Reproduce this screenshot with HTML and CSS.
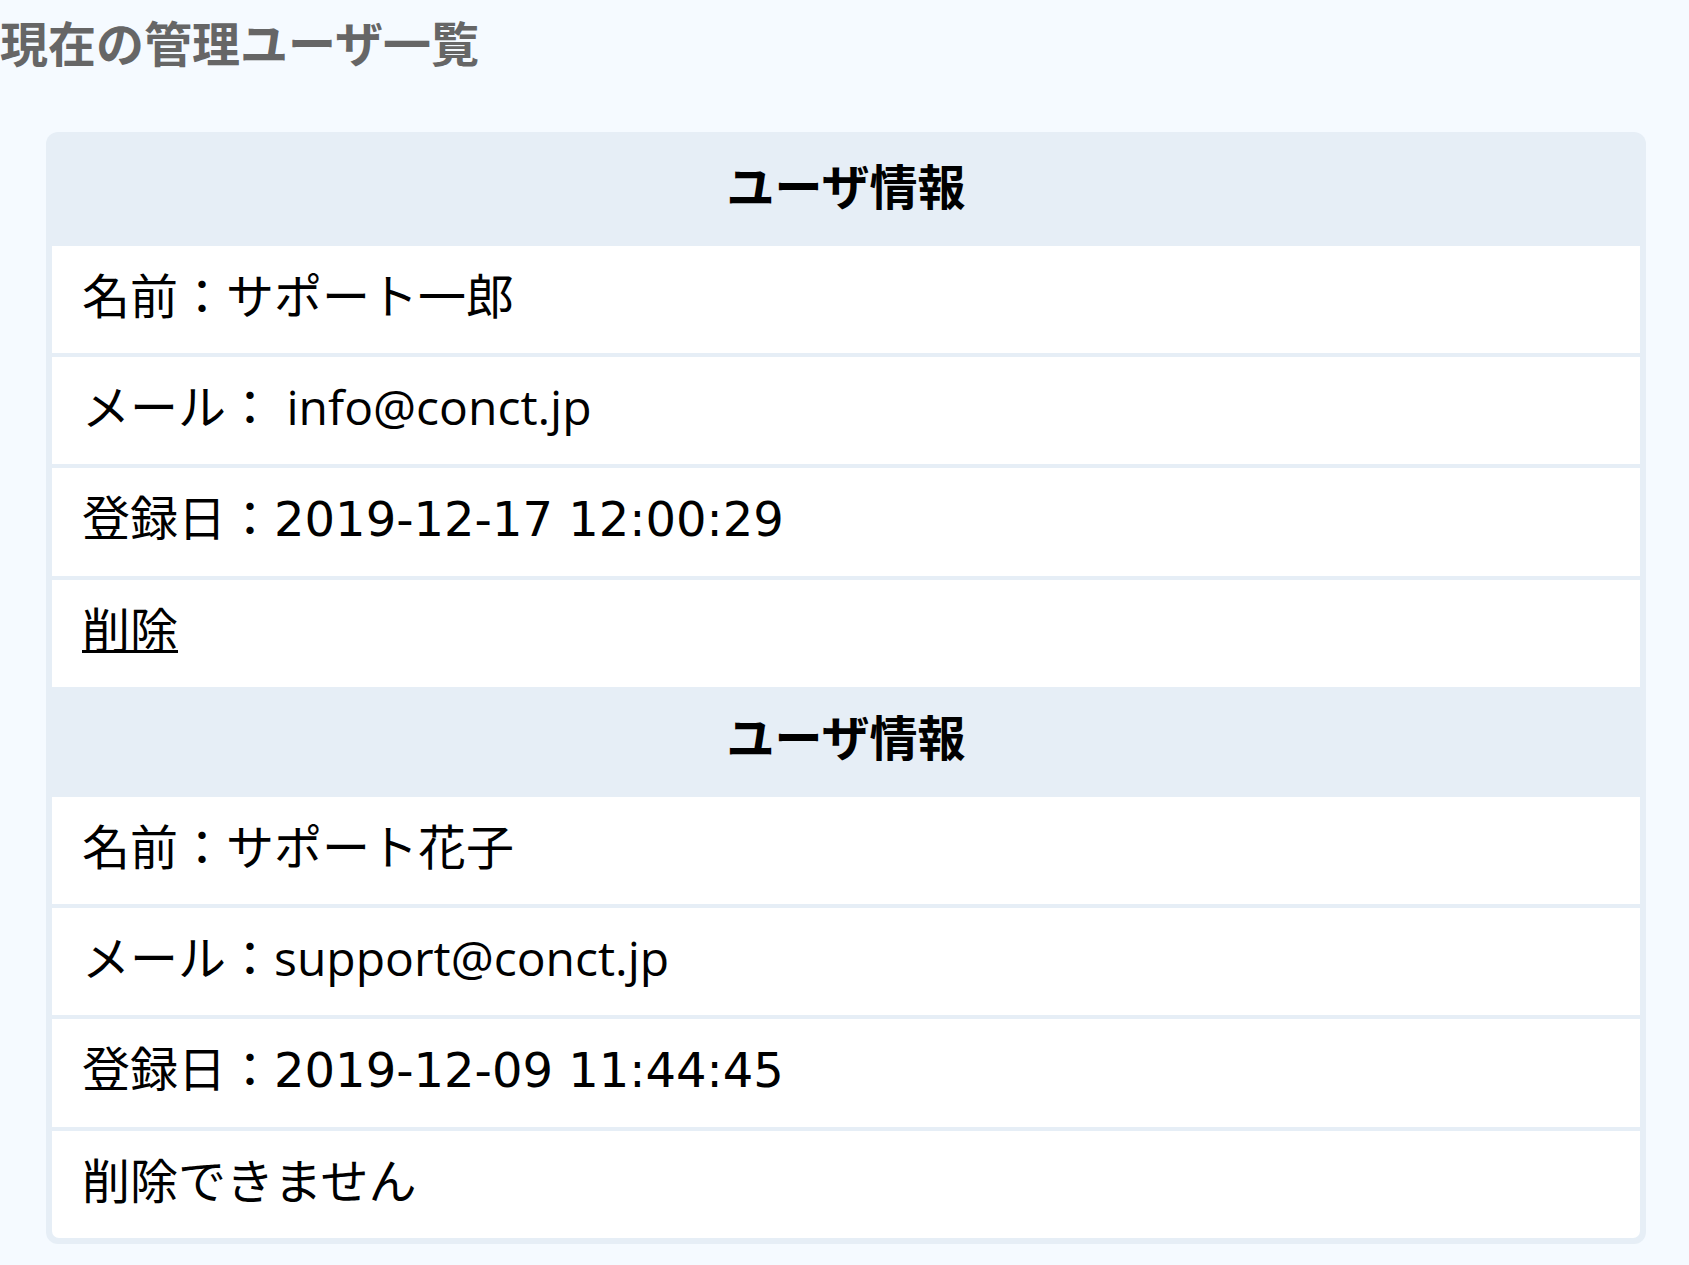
FILE: index.html
```html
<!DOCTYPE html>
	<html lang = "ja">
		<head>
			<meta charset = "utf-8">
			<link rel="stylesheet" href="styles.css">
		</head>

		<body>
			<h1 class = "page-title"> 現在の管理ユーザ一覧 </h1>

			<div class = "user-card">
				<div class = "user-block">
					<h2 class = "user-header"> ユーザ情報 </h2>
					<div class = "user-rows">
						<div class = "user-row"> 名前：サポート一郎 </div>
						<div class = "user-row"> メール： info@conct.jp </div>
						<div class = "user-row"> 登録日：<span class = "date-value">2019-12-17 12:00:29</span></div>
						<div class = "user-row"><a href = "#" class = "delete-link">削除</a></div>
					</div>
				</div>

				<div class = "user-block">
					<h2 class = "user-header"> ユーザ情報 </h2>
					<div class = "user-rows">
						<div class = "user-row"> 名前：サポート花子 </div>
						<div class = "user-row"> メール：support@conct.jp </div>
						<div class = "user-row"> 登録日：<span class = "date-value">2019-12-09 11:44:45</span></div>
						<div class = "user-row"> 削除できません </div>
					</div>
				</div>
			</div>
		</body>
	</html>
```

FILE: styles.css
```css
body {
	margin: 0;
	background: #f5faff;
	font-family: "Open Sans", "Noto Sans CJK JP", sans-serif;
	color: #000;
}

.page-title {
	margin: 5px 0 0;
	font-family: "Noto Sans CJK JP", sans-serif;
	font-size: 48px;
	line-height: 72px;
	font-weight: bold;
	color: #666666;
}

.user-card {
	width: 1600px;
	margin: 55px 0 0 46px;
	padding: 4px 6px 6px;
	box-sizing: border-box;
	background: #e6eef6;
	border-radius: 12px;
}

.user-header {
	margin: 0;
	padding: 12px 0 26px;
	font-family: "Noto Sans CJK JP", sans-serif;
	font-size: 48px;
	line-height: 72px;
	font-weight: bold;
	text-align: center;
}

.user-rows {
	display: flex;
	flex-direction: column;
	gap: 4px;
}

.user-row {
	padding: 14px 30px 21px;
	font-size: 48px;
	line-height: 72px;
	background: white;
}

.date-value {
	font-family: "DejaVu Sans", sans-serif;
}

.user-block:last-child .user-row:last-child {
	border-radius: 0 0 7px 7px;
}

.delete-link {
	color: #000;
	text-decoration: underline;
	text-decoration-thickness: 3px;
}
```
